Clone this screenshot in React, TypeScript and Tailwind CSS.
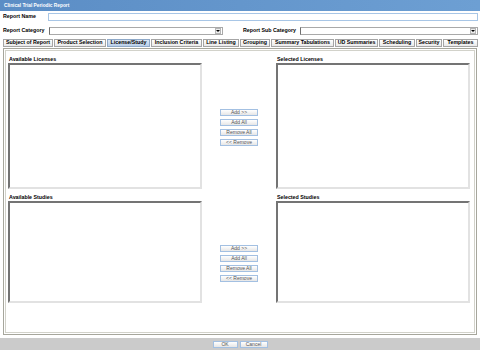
const tabs = [
    { label: "Subject of Report", w: "w-[50px]" },
    { label: "Product Selection", w: "w-[52px]" },
    { label: "License/Study", w: "w-[43px]", active: true },
    { label: "Inclusion Criteria", w: "w-[51px]" },
    { label: "Line Listing", w: "w-[36px]" },
    { label: "Grouping", w: "w-[30px]" },
    { label: "Summary Tabulations", w: "w-[63px]" },
    { label: "UD Summaries", w: "w-[43px]" },
    { label: "Scheduling", w: "w-[36px]" },
    { label: "Security", w: "w-[26px]" },
    { label: "Templates", w: "w-[35px]" },
];

const SmallButton = ({ label, w = "w-[38px]" }: { label: string; w?: string }) => (
    <div
        className={`${w} h-[7px] flex items-center justify-center border border-[#a3c0e2] bg-gradient-to-b from-white to-[#e6e6e6] text-[5px] leading-none text-[#555]`}
    >
        {label}
    </div>
);

const Select = ({ w }: { w: string }) => (
    <div className={`${w} h-[8px] flex items-center justify-end border border-[#a9a9a9] border-l-[#707070] bg-white pr-[1px]`}>
        <div className="w-[6px] h-[6px] flex items-center justify-center border border-[#b5b5b5] bg-[#ececec]">
            <div className="w-0 h-0 border-l-[2px] border-r-[2px] border-t-[2px] border-l-transparent border-r-transparent border-t-black" />
        </div>
    </div>
);

const ListBox = ({ h }: { h: string }) => (
    <div className={`w-[194px] ${h} bg-white border-2 border-t-[#747474] border-l-[#747474] border-r-[#e2e2e2] border-b-[#e2e2e2]`} />
);

const Section = ({ left, right, h, btnTop }: { left: string; right: string; h: string; btnTop: string }) => (
    <div className="flex">
        <div className="flex flex-col">
            <div className="h-[6px] text-[5.3px] leading-[6px] font-bold pl-[1px]">{left}</div>
            <div className="mt-[1px]">
                <ListBox h={h} />
            </div>
        </div>
        <div className={`w-[74px] flex flex-col items-center gap-[3px] ${btnTop}`}>
            <SmallButton label="Add >>" />
            <SmallButton label="Add All" />
            <SmallButton label="Remove All" />
            <SmallButton label="<< Remove" />
        </div>
        <div className="flex flex-col">
            <div className="h-[6px] text-[5.3px] leading-[6px] font-bold pl-[1px]">{right}</div>
            <div className="mt-[1px]">
                <ListBox h={h} />
            </div>
        </div>
    </div>
);

const App = () => {
    return (
        <div className="w-[480px] h-[350px] bg-white flex flex-col overflow-hidden font-['Liberation_Sans',Arial,sans-serif] text-black">
            <div className="h-[11px] flex items-center px-[4px] bg-gradient-to-r from-[#5b8dc5] to-[#6d9fd3] text-white text-[4.8px] font-bold">
                Clinical Trial Periodic Report
            </div>

            <div className="mt-[2px] flex items-center pl-[3px]">
                <div className="w-[45px] text-[5.3px] font-bold">Report Name</div>
                <div className="w-[430px] h-[8px] border border-[#a8c6e6] bg-white" />
            </div>

            <div className="mt-[6px] flex items-center pl-[3px]">
                <div className="w-[46px] text-[5.3px] font-bold">Report Category</div>
                <Select w="w-[174px]" />
                <div className="ml-[20px] w-[57px] text-[5.3px] font-bold">Report Sub Category</div>
                <Select w="w-[178px]" />
            </div>

            <div className="mt-[4px] flex gap-[1px] pl-[3px]">
                {tabs.map((t) => (
                    <div
                        key={t.label}
                        className={`${t.w} h-[8px] flex items-center justify-center border text-[5.3px] font-bold leading-none whitespace-nowrap ${
                            t.active
                                ? "border-[#8fa9c8] bg-gradient-to-b from-[#dbe7f5] to-[#b9cfe9]"
                                : "border-[#a5a5a5] bg-gradient-to-b from-white to-[#e9e9e9]"
                        }`}
                    >
                        {t.label}
                    </div>
                ))}
            </div>

            <div className="mt-[1px] mx-[3px] h-[287px] border border-[#a6a69c] p-[1px]">
                <div className="h-full border border-[#d2d2ca] pl-[2px] pt-[5px] flex flex-col">
                    <Section left="Available Licenses" right="Selected Licenses" h="h-[126px]" btnTop="mt-[53px]" />
                    <div className="mt-[5px]">
                        <Section left="Available Studies" right="Selected Studies" h="h-[102px]" btnTop="mt-[51px]" />
                    </div>
                </div>
            </div>

            <div className="mt-[3px] flex-1 bg-[#cbcbcb] flex items-center justify-center gap-[2px]">
                <SmallButton label="OK" w="w-[25px]" />
                <SmallButton label="Cancel" w="w-[28px]" />
            </div>
        </div>
    );
};

export default App;
